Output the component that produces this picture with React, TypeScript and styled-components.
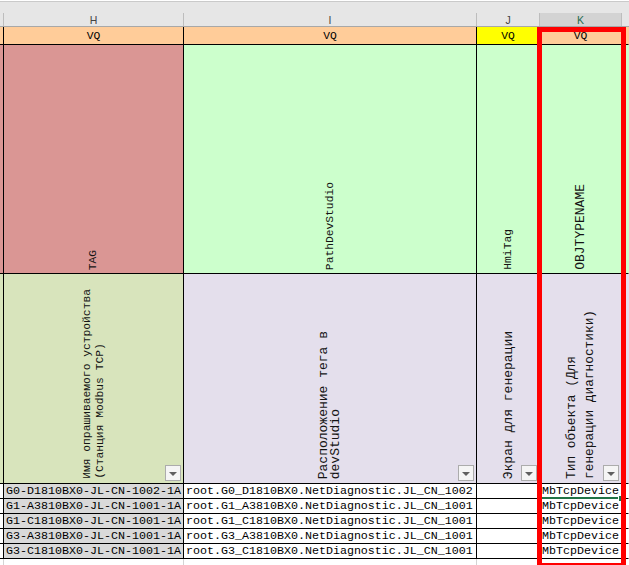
import React from "react";
import styled, { createGlobalStyle } from "styled-components";

const GlobalStyle = createGlobalStyle`
  html, body { margin: 0; padding: 0; background: #ffffff; }
  body { font-family: "Liberation Mono", "DejaVu Sans Mono", monospace; }
`;

const MONO = `"Liberation Mono", "Courier New", monospace`;

const Sheet = styled.div`
  position: relative;
  width: 629px;
  height: 565px;
  padding-top: 1px;
  box-sizing: border-box;
  overflow: hidden;
  background: #ffffff;
`;

const Grid = styled.div`
  display: grid;
  grid-template-columns: 4px 180px 293px 63px 82px 1fr;
  grid-template-rows: 26px 18px 229px 210px repeat(5, 15px) 1fr;
  height: 100%;
  font-family: ${MONO};
  color: #000;
`;

const ColHead = styled.div`
  display: flex;
  padding-top: 11px;
  background: #e6e6e6;
  border-top: 1px solid #cacaca;
  border-bottom: 1px solid #a8a8a8;
  box-sizing: border-box;
`;

const ColLabel = styled.div<{ $selected?: boolean; $last?: boolean }>`
  flex: 1;
  display: flex;
  align-items: center;
  justify-content: center;
  border-right: 1px solid ${(p) => (p.$last ? "transparent" : "#bdbdbd")};
  background: ${(p) => (p.$selected ? "#d3d3d3" : "transparent")};
  color: ${(p) => (p.$selected ? "#1e6b50" : "#444444")};
  font-family: "Liberation Sans", Arial, sans-serif;
  font-size: 10.5px;
`;

const TypeCell = styled.div<{ $bg: string; $last?: boolean }>`
  display: flex;
  align-items: center;
  justify-content: center;
  background: ${(p) => p.$bg};
  border-right: 1px solid ${(p) => (p.$last ? "transparent" : "#000")};
  border-bottom: 1px solid #000;
  box-sizing: border-box;
  font-size: 11.3px;
  overflow: hidden;
`;

const TitleCell = styled.div<{ $bg: string; $last?: boolean; $pb: number }>`
  position: relative;
  display: flex;
  align-items: flex-end;
  justify-content: center;
  padding-bottom: ${(p) => p.$pb}px;
  background: ${(p) => p.$bg};
  border-right: 1px solid ${(p) => (p.$last ? "transparent" : "#000")};
  border-bottom: 1px solid #000;
  box-sizing: border-box;
  overflow: hidden;
`;

const VText = styled.div<{ $size: number; $lh: number }>`
  writing-mode: vertical-rl;
  transform: rotate(180deg);
  white-space: nowrap;
  font-size: ${(p) => p.$size}px;
  line-height: ${(p) => p.$lh}px;
  color: #141414;
`;

const FilterButton = styled.span`
  position: absolute;
  right: 2px;
  bottom: 2px;
  width: 16px;
  height: 16px;
  box-sizing: border-box;
  border: 1px solid #acacac;
  background: #f5f5f5;
  display: flex;
  align-items: center;
  justify-content: center;

  &::before {
    content: "";
    border-left: 4px solid transparent;
    border-right: 4px solid transparent;
    border-top: 4px solid #606060;
    margin-top: 1px;
  }
`;

const DataCell = styled.div<{ $bg?: string; $active?: boolean; $last?: boolean }>`
  position: relative;
  background: ${(p) => p.$bg ?? "#ffffff"};
  border-right: 1px solid ${(p) => (p.$last ? "transparent" : "#000")};
  border-bottom: 1px solid ${(p) => (p.$active ? "#217346" : "#000")};
  box-shadow: ${(p) => (p.$active ? "inset 0 -1px 0 #217346" : "none")};
  box-sizing: border-box;
  padding-left: 2px;
  font-size: 11.67px;
  line-height: 14px;
  white-space: nowrap;

  &::after {
    content: "";
    display: ${(p) => (p.$active ? "block" : "none")};
    position: absolute;
    right: -4px;
    bottom: -4px;
    width: 5px;
    height: 5px;
    background: #217346;
    border: 1px solid #ffffff;
    z-index: 2;
  }
`;

const EmptyCell = styled.div<{ $last?: boolean }>`
  border-right: 1px solid ${(p) => (p.$last ? "transparent" : "#d4d4d4")};
  box-sizing: border-box;
  background: #ffffff;
`;

const Highlight = styled.div`
  position: absolute;
  left: 537px;
  top: 27px;
  width: 89px;
  height: 541px;
  border: 5px solid #ff0000;
  box-sizing: border-box;
  pointer-events: none;
  z-index: 3;
`;

const C = {
  peach: "#ffcc99",
  yellow: "#ffff00",
  pink: "#da9694",
  green: "#ccffcc",
  olive: "#d8e4bc",
  lilac: "#e4dfec",
  gray: "#d9d9d9",
};

type Col = {
  key: string;
  letter?: string;
  selected?: boolean;
  last?: boolean;
  typeBg: string;
  type?: string;
  headBg: string;
  head?: string[];
  headSize?: number;
  headLh?: number;
  descBg: string;
  desc?: string[];
  descSize?: number;
  descLh?: number;
  filter?: boolean;
  dataBg?: string;
  data?: string[];
};

const cols: Col[] = [
  { key: "G", typeBg: C.peach, headBg: C.pink, descBg: C.olive },
  {
    key: "H",
    letter: "H",
    typeBg: C.peach,
    type: "VQ",
    headBg: C.pink,
    head: ["TAG"],
    headSize: 11.3,
    headLh: 13,
    descBg: C.olive,
    desc: ["Имя опрашиваемого устройства", "(Станция Modbus TCP)"],
    descSize: 11.3,
    descLh: 13,
    filter: true,
    dataBg: C.gray,
    data: [
      "G0-D1810BX0-JL-CN-1002-1A",
      "G1-A3810BX0-JL-CN-1001-1A",
      "G1-C1810BX0-JL-CN-1001-1A",
      "G3-A3810BX0-JL-CN-1001-1A",
      "G3-C1810BX0-JL-CN-1001-1A",
    ],
  },
  {
    key: "I",
    letter: "I",
    typeBg: C.peach,
    type: "VQ",
    headBg: C.green,
    head: ["PathDevStudio"],
    headSize: 11.3,
    headLh: 13,
    descBg: C.lilac,
    desc: ["Расположение тега в", "devStudio"],
    descSize: 13,
    descLh: 12,
    filter: true,
    data: [
      "root.G0_D1810BX0.NetDiagnostic.JL_CN_1002",
      "root.G1_A3810BX0.NetDiagnostic.JL_CN_1001",
      "root.G1_C1810BX0.NetDiagnostic.JL_CN_1001",
      "root.G3_A3810BX0.NetDiagnostic.JL_CN_1001",
      "root.G3_C1810BX0.NetDiagnostic.JL_CN_1001",
    ],
  },
  {
    key: "J",
    letter: "J",
    typeBg: C.yellow,
    type: "VQ",
    headBg: C.green,
    head: ["HmiTag"],
    headSize: 11.3,
    headLh: 13,
    descBg: C.lilac,
    desc: ["Экран для генерации"],
    descSize: 13,
    descLh: 13,
    filter: true,
    data: ["", "", "", "", ""],
  },
  {
    key: "K",
    letter: "K",
    selected: true,
    typeBg: C.peach,
    type: "VQ",
    headBg: C.green,
    head: ["OBJTYPENAME"],
    headSize: 13,
    headLh: 13,
    descBg: C.lilac,
    desc: ["Тип объекта (Для", "генерации диагностики)"],
    descSize: 12.8,
    descLh: 18,
    filter: true,
    data: ["MbTcpDevice", "MbTcpDevice", "MbTcpDevice", "MbTcpDevice", "MbTcpDevice"],
  },
  { key: "L", last: true, typeBg: C.peach, headBg: C.green, descBg: C.lilac },
];

const Lines: React.FC<{ lines?: string[]; size?: number; lh?: number }> = ({ lines, size = 11.3, lh = 13 }) =>
  lines ? (
    <VText $size={size} $lh={lh}>
      {lines.map((l, i) => (
        <React.Fragment key={i}>
          {i > 0 && <br />}
          {l}
        </React.Fragment>
      ))}
    </VText>
  ) : null;

export default function App() {
  return (
    <>
      <GlobalStyle />
      <Sheet>
        <Grid>
          {cols.map((c) => (
            <ColHead key={`h-${c.key}`}>
              <ColLabel $selected={c.selected} $last={c.last}>
                {c.letter ?? ""}
              </ColLabel>
            </ColHead>
          ))}
          {cols.map((c) => (
            <TypeCell key={`t-${c.key}`} $bg={c.typeBg} $last={c.last}>
              {c.type ?? ""}
            </TypeCell>
          ))}
          {cols.map((c) => (
            <TitleCell key={`n-${c.key}`} $bg={c.headBg} $last={c.last} $pb={3}>
              <Lines lines={c.head} size={c.headSize} lh={c.headLh} />
            </TitleCell>
          ))}
          {cols.map((c) => (
            <TitleCell key={`d-${c.key}`} $bg={c.descBg} $last={c.last} $pb={4}>
              <Lines lines={c.desc} size={c.descSize} lh={c.descLh} />
              {c.filter && <FilterButton />}
            </TitleCell>
          ))}
          {[0, 1, 2, 3, 4].map((r) =>
            cols.map((c) => (
              <DataCell
                key={`r${r}-${c.key}`}
                $bg={c.dataBg}
                $last={c.last}
                $active={c.key === "K" && r === 0}
              >
                {c.data ? c.data[r] : ""}
              </DataCell>
            ))
          )}
          {cols.map((c) => (
            <EmptyCell key={`e-${c.key}`} $last={c.last} />
          ))}
        </Grid>
        <Highlight />
      </Sheet>
    </>
  );
}
